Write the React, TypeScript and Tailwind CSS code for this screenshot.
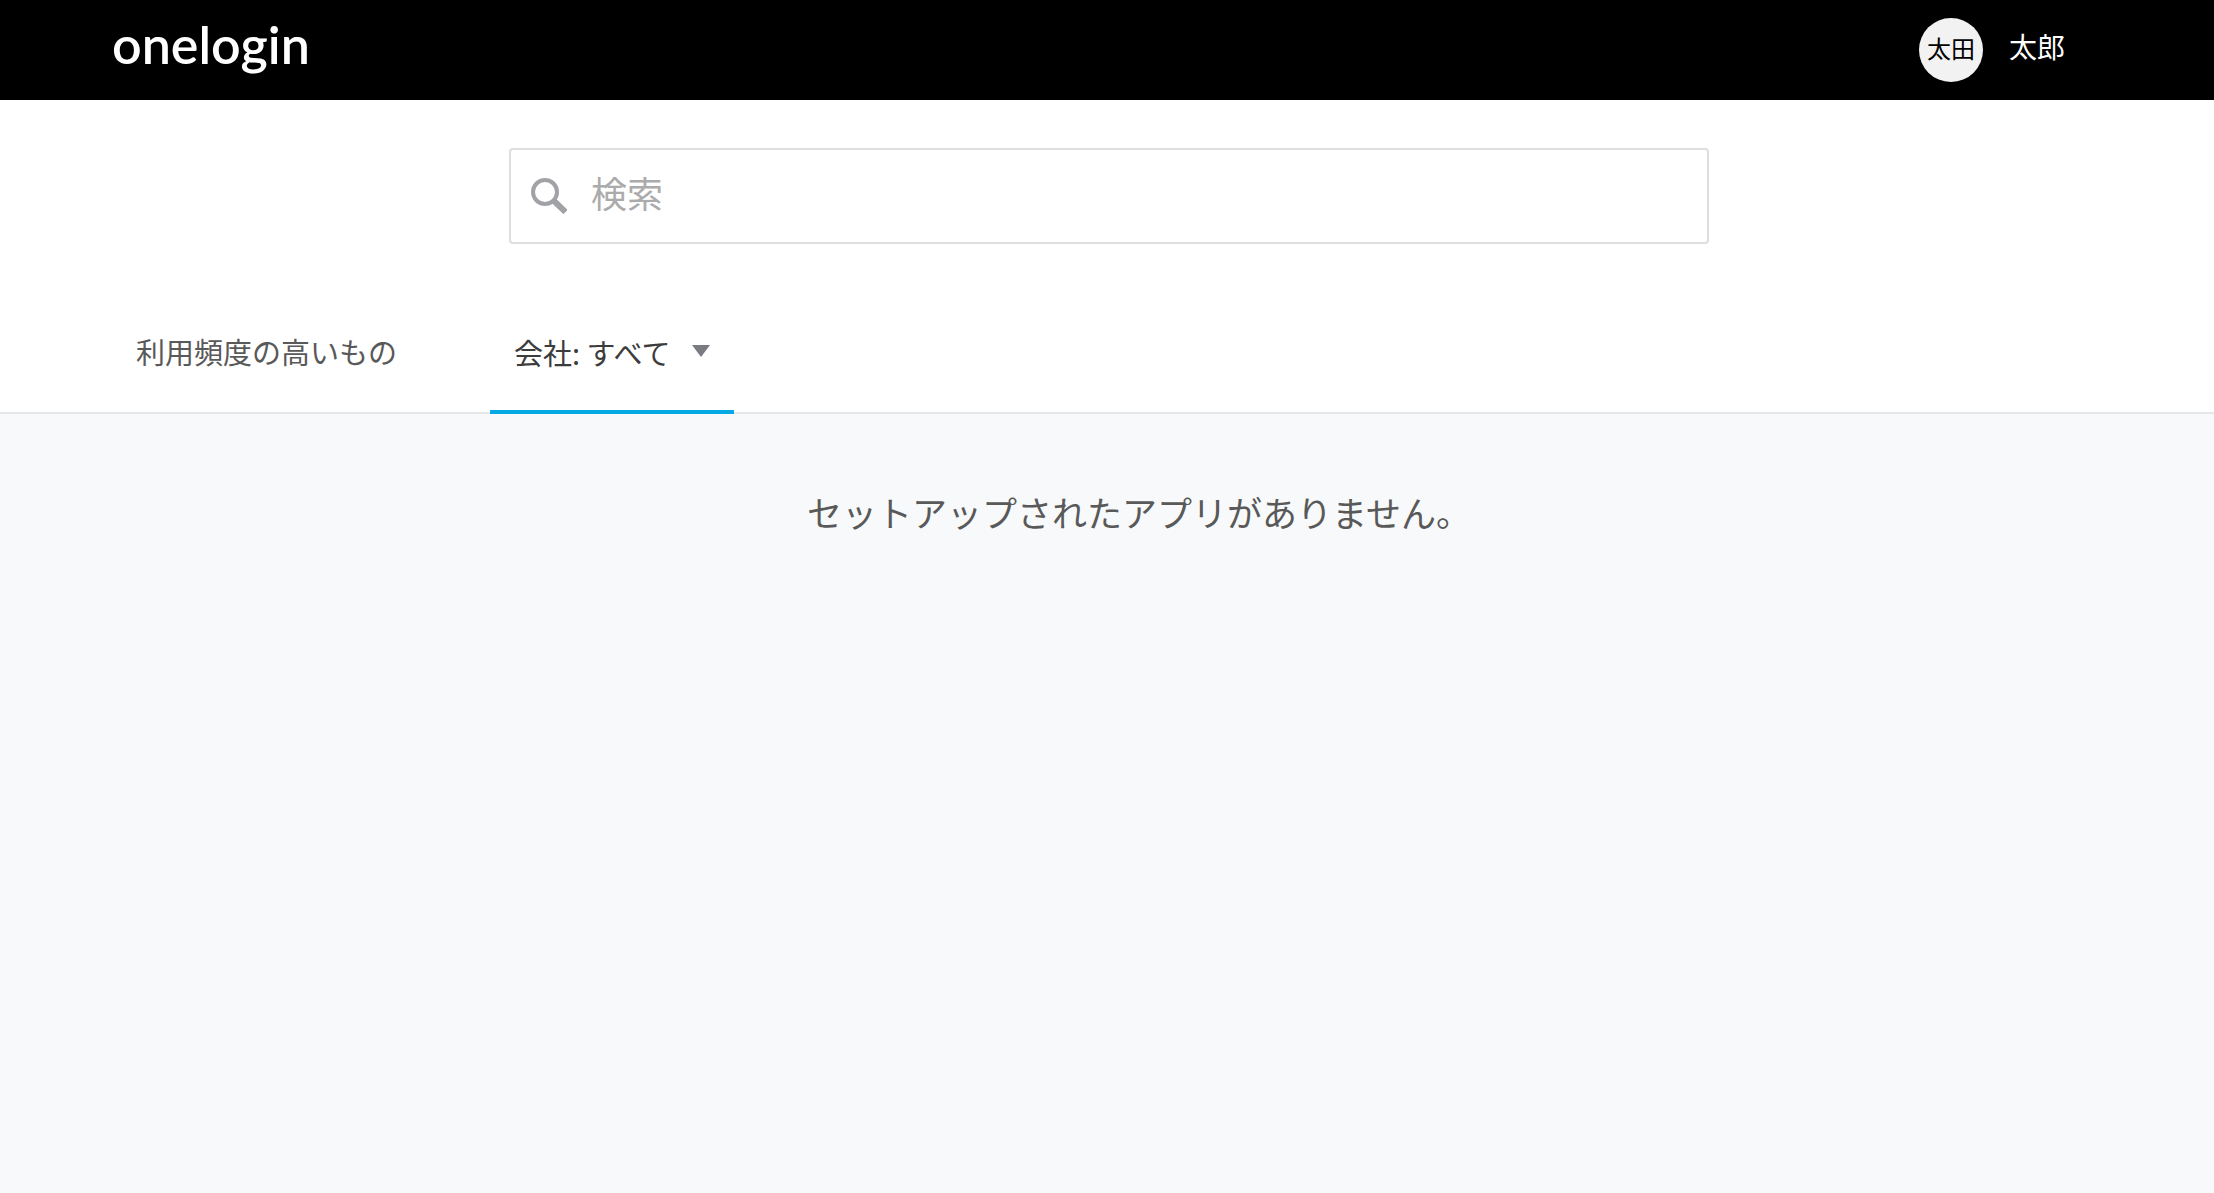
const Header = () => (
  <header className="flex h-[100px] items-center justify-between bg-black pr-[149px] pl-28 text-white">
    <a href="#" className="pb-3 font-[Lato,sans-serif] text-[52px] leading-[72px] font-semibold">
      onelogin
    </a>
    <button type="button" className="flex items-center">
      <span className="flex size-16 items-center justify-center rounded-full bg-[#f2f2f2] text-2xl text-black">
        <span className="pb-1">太田</span>
      </span>
      <span className="pb-2 pl-[26px] text-[28px]">太郎</span>
    </button>
  </header>
);

const SearchBox = () => (
  <label className="mx-auto flex h-24 w-full max-w-[1200px] items-center rounded border-2 border-[#dedede] bg-white pl-5">
    <svg viewBox="0 0 36 36" className="size-9 shrink-0" fill="none" stroke="#a0a2a6" aria-hidden="true">
      <circle cx="14" cy="14" r="12" strokeWidth="4" />
      <path d="M22 22 L34.5 34" strokeWidth="6" />
    </svg>
    <input
      type="text"
      aria-label="検索"
      placeholder="検索"
      className="min-w-0 flex-1 bg-transparent pb-2 pl-6 text-4xl text-[#444] outline-none placeholder:text-[#ababab]"
    />
  </label>
);

const Tabs = () => (
  <nav className="flex h-28 pl-28 text-[29px]">
    <button type="button" className="border-b-4 border-transparent px-6 pb-1 text-[#595959]">
      利用頻度の高いもの
    </button>
    <button
      type="button"
      className="-mb-0.5 ml-[69px] flex items-center border-b-4 border-[#05a9e3] px-6 pb-1 text-[#3c3c3c]"
    >
      <span>会社: すべて</span>
      <svg viewBox="0 0 18 12" className="mb-1 ml-[22px] h-3 w-[18px]" fill="#7a7b82" aria-hidden="true">
        <path d="M0 0H18L9 12Z" />
      </svg>
    </button>
  </nav>
);

export default function App() {
  return (
    <div className="flex min-h-screen flex-col bg-[#f8f9fb] font-['Noto_Sans_CJK_JP',sans-serif]">
      <Header />
      <div className="border-b-2 border-[#e4e6e8] bg-white">
        <div className="pt-12 pb-14 pl-1">
          <SearchBox />
        </div>
        <Tabs />
      </div>
      <main className="flex-1 pt-[70px] pl-16 text-center">
        <p className="text-[35px] leading-[56px] text-[#595959]">セットアップされたアプリがありません。</p>
      </main>
    </div>
  );
}
